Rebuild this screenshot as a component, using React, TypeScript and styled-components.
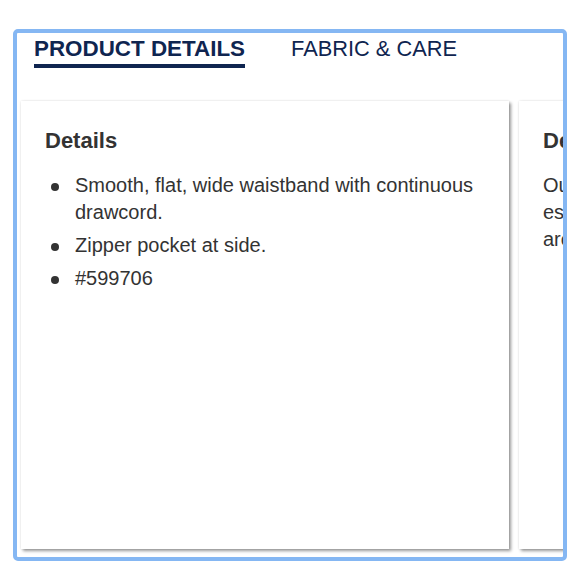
import React from "react";
import styled, { createGlobalStyle } from "styled-components";

const GlobalStyle = createGlobalStyle`
  html, body {
    margin: 0;
    padding: 0;
    background: #ffffff;
    font-family: "Liberation Sans", Arial, sans-serif;
  }
`;

const Page = styled.div`
  padding: 29px 13px 0 13px;
`;

const Frame = styled.div`
  border: 4px solid #85b7f3;
  border-radius: 5px;
  height: 524px;
  overflow: hidden;
  display: flex;
  flex-direction: column;
`;

const TabBar = styled.div`
  display: flex;
  gap: 46px;
  padding: 3px 0 0 17px;
`;

const Tab = styled.button<{ $active?: boolean }>`
  background: none;
  border: none;
  border-bottom: 4px solid ${(p) => (p.$active ? "#0f2550" : "transparent")};
  color: #0f2550;
  cursor: pointer;
  font: ${(p) => (p.$active ? "700 22.4px" : "400 21.8px")}/25px "Liberation Sans", Arial, sans-serif;
  margin: 0;
  padding: 0 0 3px 0;
  text-transform: uppercase;
`;

const CardTrack = styled.div`
  display: flex;
  gap: 10px;
  margin-top: 33px;
  padding: 0 0 8px 4px;
`;

const Card = styled.section`
  flex: 0 0 488px;
  height: 448px;
  box-sizing: border-box;
  background: #ffffff;
  box-shadow: 2px 2px 3px rgba(0, 0, 0, 0.4), 0 0 2px rgba(0, 0, 0, 0.12);
  padding: 27px 24px 24px 24px;
  color: #333333;
`;

const CardTitle = styled.h3`
  font-size: 22px;
  font-weight: 700;
  line-height: 25px;
  margin: 0 0 19px 0;
`;

const BulletList = styled.ul`
  list-style: none;
  margin: 0;
  padding: 0;
`;

const Bullet = styled.li`
  display: flex;
  font-size: 20px;
  line-height: 27px;
  margin-bottom: 6px;
  &::before {
    content: "";
    flex: 0 0 8px;
    height: 8px;
    border-radius: 50%;
    background: #333333;
    margin: 11px 16px 0 6px;
  }
`;

const Paragraph = styled.p`
  font-size: 20px;
  line-height: 27px;
  margin: 0;
`;

const details = [
  "Smooth, flat, wide waistband with continuous drawcord.",
  "Zipper pocket at side.",
  "#599706",
];

export default function App() {
  return (
    <Page>
      <GlobalStyle />
      <Frame>
        <TabBar>
          <Tab $active>Product Details</Tab>
          <Tab>Fabric &amp; Care</Tab>
        </TabBar>
        <CardTrack>
          <Card>
            <CardTitle>Details</CardTitle>
            <BulletList>
              {details.map((d) => (
                <Bullet key={d}>{d}</Bullet>
              ))}
            </BulletList>
          </Card>
          <Card>
            <CardTitle>Description</CardTitle>
            <Paragraph>
              Our go-to pants for everyday comfort, with an
              <br />
              essential tapered fit for the gym or
              <br />
              around town.
            </Paragraph>
          </Card>
        </CardTrack>
      </Frame>
    </Page>
  );
}
